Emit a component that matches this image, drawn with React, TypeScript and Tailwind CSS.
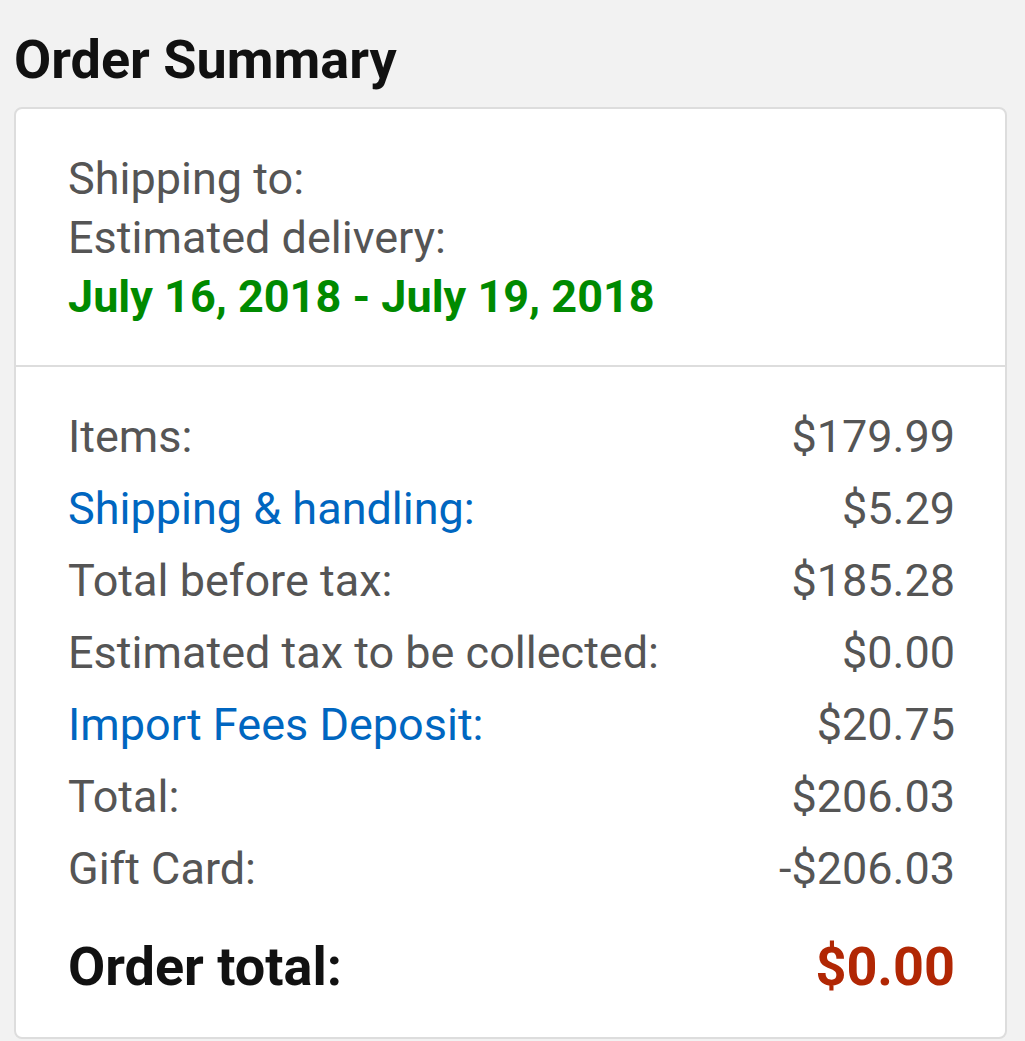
const rows = [
  { label: 'Items:', value: '$179.99', link: false },
  { label: 'Shipping & handling:', value: '$5.29', link: true },
  { label: 'Total before tax:', value: '$185.28', link: false },
  { label: 'Estimated tax to be collected:', value: '$0.00', link: false },
  { label: 'Import Fees Deposit:', value: '$20.75', link: true },
  { label: 'Total:', value: '$206.03', link: false },
  { label: 'Gift Card:', value: '-$206.03', link: false },
];

export default function App() {
  return (
    <div className="min-h-screen bg-[#f2f2f2] px-[14px] pt-[33px] font-['Roboto',sans-serif]">
      <h1 className="text-[54px] font-bold leading-none text-[#111111]">Order Summary</h1>
      <div className="mt-[20px] w-[993px] rounded-[8px] border-2 border-[#dddddd] bg-white">
        <div className="pl-[52px] pr-[50px] pt-[40px] pb-[39px] text-[45px] leading-[59px] text-[#555555]">
          <div>Shipping to:</div>
          <div>Estimated delivery:</div>
          <div className="font-bold text-[#008a00]">July 16, 2018 - July 19, 2018</div>
        </div>
        <div className="h-[2px] bg-[#dddddd]" />
        <div className="pl-[52px] pr-[50px] pt-[34px] pb-[28px]">
          {rows.map((r) => (
            <div key={r.label} className="flex justify-between text-[45px] leading-[72px]">
              <span className={r.link ? 'text-[#0066c0]' : 'text-[#555555]'}>{r.label}</span>
              <span className="text-[#555555]">{r.value}</span>
            </div>
          ))}
          <div className="mt-[20px] flex justify-between text-[54px] font-bold leading-[84px]">
            <span className="text-[#111111]">Order total:</span>
            <span className="text-[#b12704]">$0.00</span>
          </div>
        </div>
      </div>
    </div>
  );
}
